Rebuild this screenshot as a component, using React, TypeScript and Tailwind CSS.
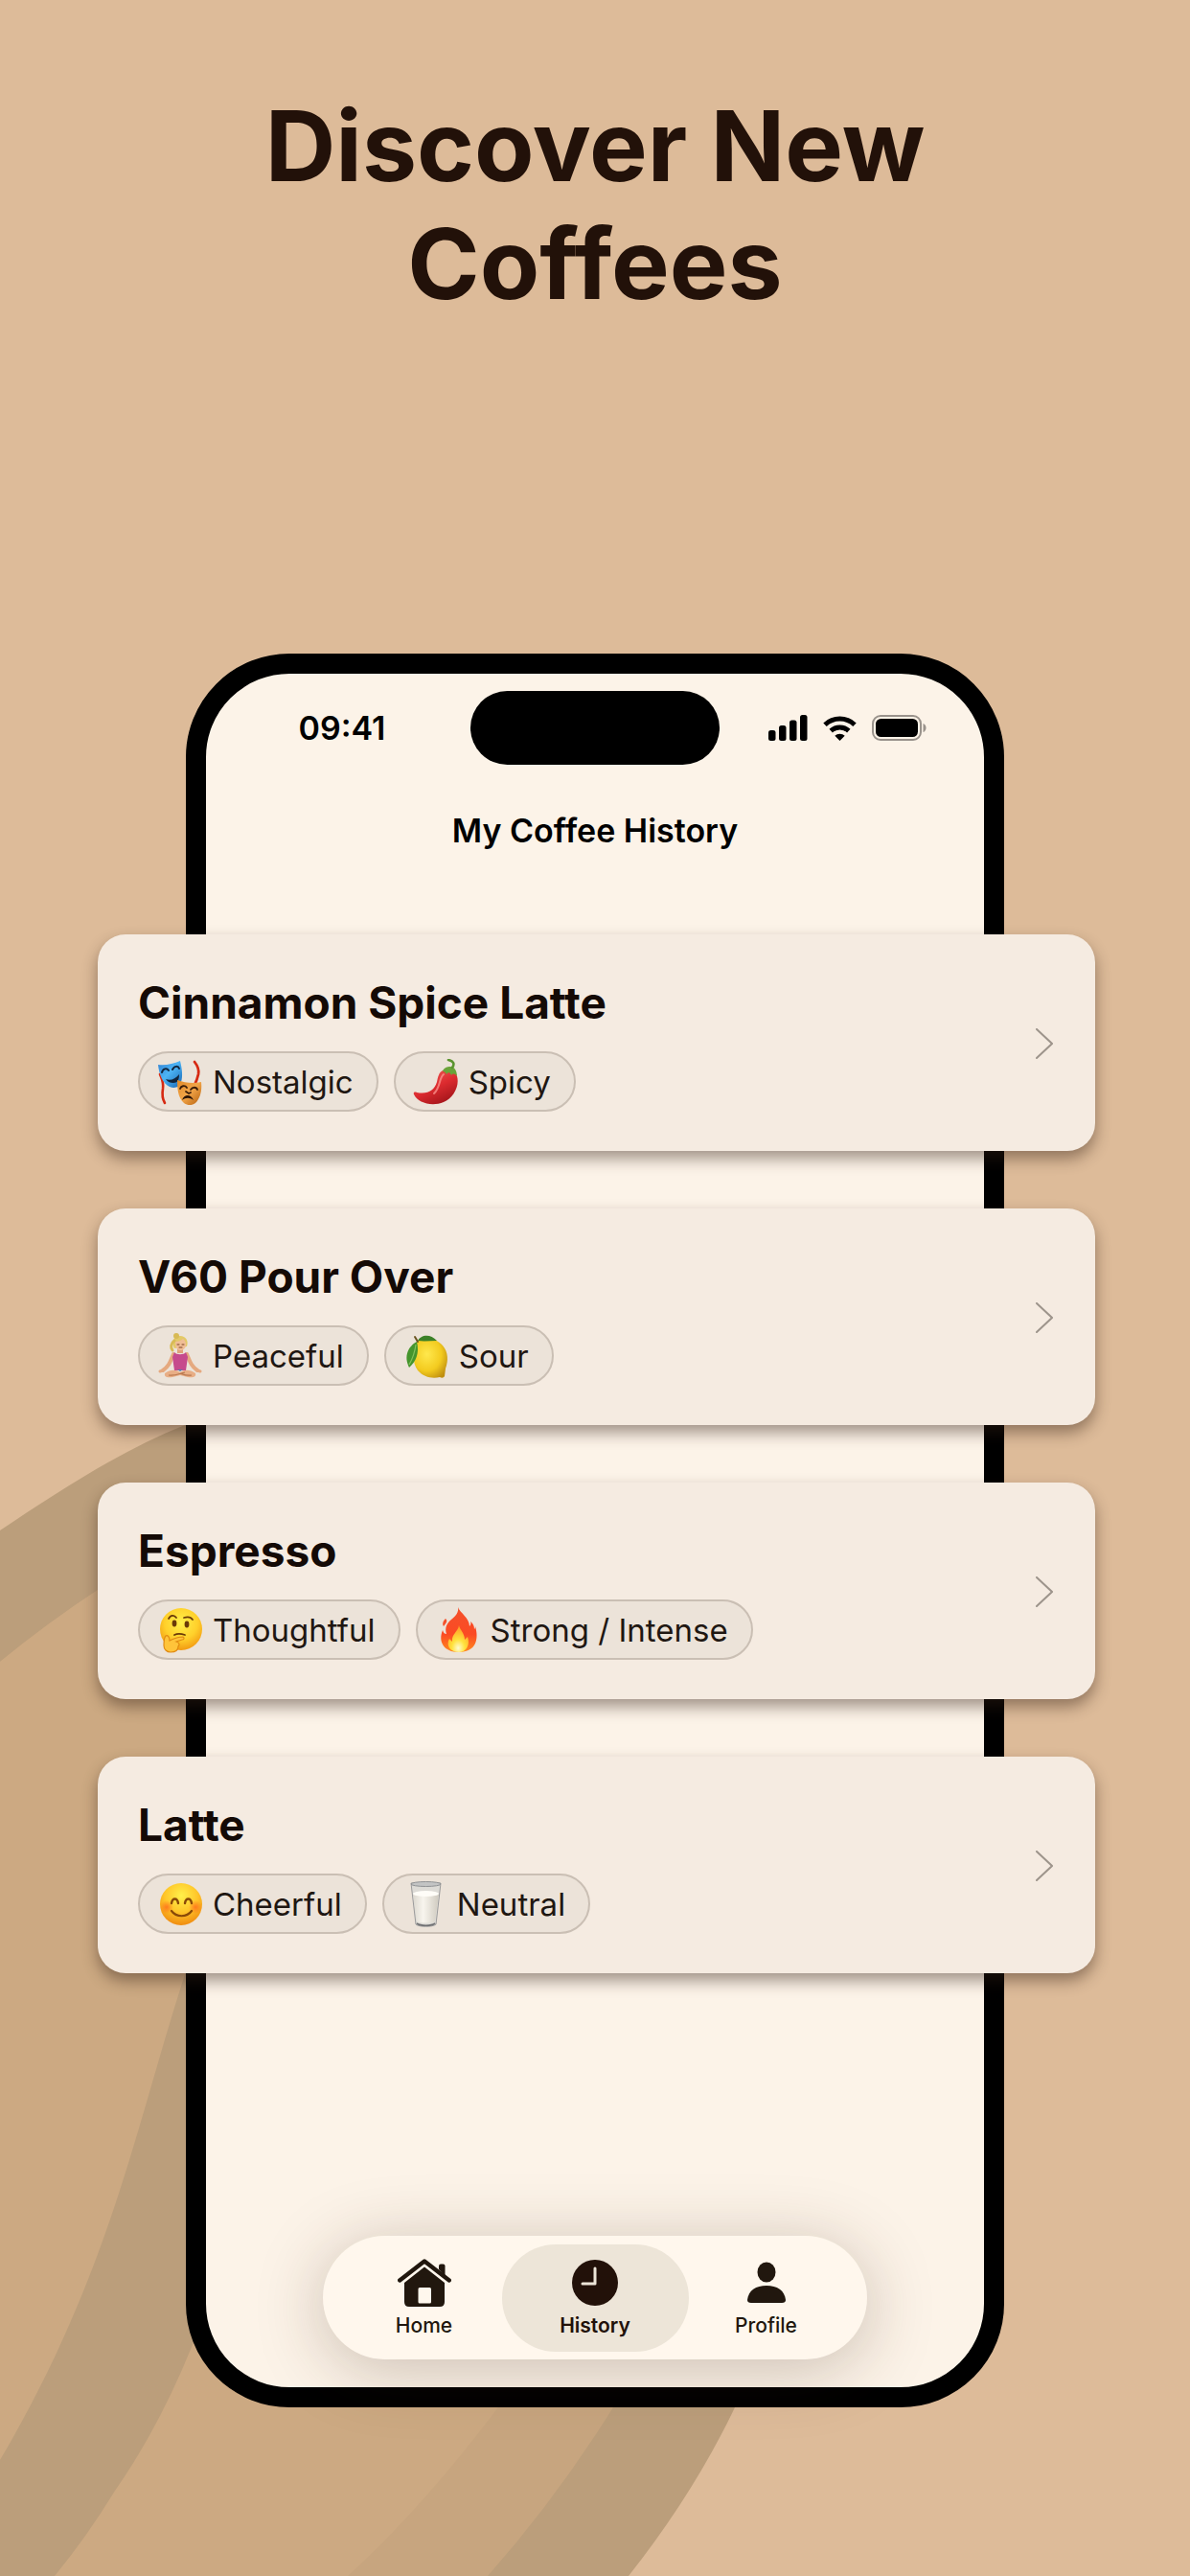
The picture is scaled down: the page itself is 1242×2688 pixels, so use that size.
import type { ReactNode } from "react";

interface Tag {
  label: string;
  icon: ReactNode;
}

interface Coffee {
  name: string;
  tags: Tag[];
}

// Mood and taste icons, all on a 48x48 box
const Icons = {
  masks: (
    <svg viewBox="0 0 48 48" className="size-12 shrink-0" aria-hidden="true">
      <defs>
        <linearGradient id="maskBlue" x1="0" y1="0" x2="1" y2="1">
          <stop offset="0" stopColor="#2f7fd0" />
          <stop offset="0.45" stopColor="#4db4f5" />
          <stop offset="1" stopColor="#1766b4" />
        </linearGradient>
        <linearGradient id="maskGold" x1="0" y1="0" x2="1" y2="1">
          <stop offset="0" stopColor="#e08a2a" />
          <stop offset="0.5" stopColor="#f2a548" />
          <stop offset="1" stopColor="#b5600f" />
        </linearGradient>
      </defs>
      <path d="M3 16c2 5 4 8 3 15-1 6-1 10 2 15" fill="none" stroke="#d62a12" strokeWidth="2.6" strokeLinecap="round" />
      <path d="M39 3c4 5 5 8 4 13-1 4-2 7-3 9" fill="none" stroke="#d62a12" strokeWidth="2.8" strokeLinecap="round" />
      <path d="M1 6c8 1 16-1 23-4 2 8 3 16 1 22-2 6-7 7-12 5C6 26 2 16 1 6z" fill="url(#maskBlue)" />
      <path d="M5 14c1-4 5-5 7-2M16 11c2-4 6-4 7-1" fill="none" stroke="#11243c" strokeWidth="2" strokeLinecap="round" />
      <path d="M9 21c5 2 10 0 14-5 0 6-2 9-6 9-3 0-6-1-8-4z" fill="#11243c" />
      <path d="M21 22c8 3 17 4 25 2 1 9-1 17-6 22-4 3-9 3-13-1-5-5-6-14-6-23z" fill="url(#maskGold)" />
      <path d="M24 31c1-3 5-4 7-1M35 32c2-3 6-3 7 0M30 34l3 2 2-1" fill="none" stroke="#3a1c08" strokeWidth="1.8" strokeLinecap="round" />
      <path d="M26 43c2-6 9-7 12 0-4-3-8-3-12 0z" fill="#2c1406" />
    </svg>
  ),
  chili: (
    <svg viewBox="0 0 48 48" className="size-12 shrink-0" aria-hidden="true">
      <defs>
        <linearGradient id="chiliRed" x1="0.2" y1="0" x2="0.8" y2="1">
          <stop offset="0" stopColor="#f0605a" />
          <stop offset="0.5" stopColor="#dc2b2f" />
          <stop offset="1" stopColor="#9c1218" />
        </linearGradient>
      </defs>
      <path d="M31 12c5-2 13-1 15 6 3 10-4 23-14 27C20 50 5 46 1 37c-1-2 1-3 3-2 12 2 18-2 21-11 1-5 2-10 6-12z" fill="url(#chiliRed)" />
      <path d="M32 16c-5 4-3 13-10 20" fill="none" stroke="#ff9d96" strokeWidth="2" strokeLinecap="round" opacity="0.7" />
      <path d="M31 13c1-4 5-5 8-5 4 0 7 4 7 10-3-3-4-3-6-1-1-3-3-4-5-1-1-2-2-3-4-3z" fill="#6aa43a" />
      <path d="M41 9c3-4 1-7-4-8" fill="none" stroke="#5b9430" strokeWidth="2.6" strokeLinecap="round" />
    </svg>
  ),
  yoga: (
    <svg viewBox="0 0 48 48" className="size-12 shrink-0" aria-hidden="true">
      <path d="M18 16c-4-6-1-13 6-13 6 0 9 5 7 11z" fill="#e3c968" />
      <circle cx="20" cy="3" r="3" fill="#d8ba55" />
      <path d="M18 8c-4 3-4 7-2 10" fill="none" stroke="#d8ba55" strokeWidth="3" strokeLinecap="round" />
      <path d="M21 15h6v6h-6z" fill="#dfa27a" />
      <path d="M19 9c3 0 6-1 8-3 2 2 3 3 3 6 0 4-3 6-6 6s-5-3-5-9z" fill="#f0bd96" />
      <path d="M21 12h2M26 12h2M23 15h3" stroke="#7b4527" strokeWidth="1" strokeLinecap="round" />
      <path d="M17 22c-3 7-4 12-11 17M31 22c3 7 4 12 11 17" fill="none" stroke="#e5a97f" strokeWidth="4" strokeLinecap="round" />
      <path d="M6 39l-3 1M42 39l3 1" stroke="#e5a97f" strokeWidth="3" strokeLinecap="round" />
      <path d="M18 20c2 3 10 3 12 0l2 5-2 14H18l-2-14z" fill="#c64a8d" />
      <path d="M8 42c6-4 11-4 16-1 5-3 10-3 16 1 1 4-3 5-8 4l-8-2-8 2c-5 1-9 0-8-4z" fill="#e8ae85" />
      <path d="M12 44c7 1 12-2 17-3M36 44c-6 1-9-1-12-2" fill="none" stroke="#b9784f" strokeWidth="1.2" />
      <path d="M21 38h6l-3 2z" fill="#5876a8" />
    </svg>
  ),
  lemon: (
    <svg viewBox="0 0 48 48" className="size-12 shrink-0" aria-hidden="true">
      <defs>
        <radialGradient id="lemonYellow" cx="0.4" cy="0.4" r="0.7">
          <stop offset="0" stopColor="#ffe84d" />
          <stop offset="0.6" stopColor="#f3cb1f" />
          <stop offset="1" stopColor="#c08f10" />
        </radialGradient>
      </defs>
      <path d="M15 8c8-4 19-3 26 5 6 7 6 16 3 24l-1 8c-1 2-3 2-5 1-8 2-17 0-23-7-6-8-6-23 0-31z" fill="url(#lemonYellow)" />
      <path d="M15 8c3-6 13-8 20 0-7 0-13 1-20 0z" fill="#3c8128" />
      <path d="M14 9C5 14 0 24 6 36c7-6 11-15 8-27z" fill="#45952d" />
      <path d="M13 12c-1 8-3 14-7 21" fill="none" stroke="#82c25c" strokeWidth="1.2" />
      <path d="M12 4l3 5" stroke="#6b5420" strokeWidth="2" strokeLinecap="round" />
    </svg>
  ),
  thinking: (
    <svg viewBox="0 0 48 48" className="size-12 shrink-0" aria-hidden="true">
      <defs>
        <radialGradient id="faceThink" cx="0.5" cy="0.35" r="0.65">
          <stop offset="0" stopColor="#fff04a" />
          <stop offset="0.6" stopColor="#ffd02b" />
          <stop offset="1" stopColor="#f29a12" />
        </radialGradient>
      </defs>
      <circle cx="25" cy="23" r="22" fill="url(#faceThink)" />
      <ellipse cx="18" cy="17" rx="2.4" ry="3.4" fill="#6a3a08" />
      <ellipse cx="31" cy="18" rx="2.4" ry="3.4" fill="#6a3a08" />
      <path d="M12 12c2-4 6-4 8-1M28 11c3-1 7-1 9 2" fill="none" stroke="#6a3a08" strokeWidth="1.8" strokeLinecap="round" />
      <path d="M18 29c4-2 8-1 11 0" fill="none" stroke="#6a3a08" strokeWidth="1.8" strokeLinecap="round" />
      <path d="M9 30c2-1 4 1 4 5 4-2 9-4 14-4 2 1 1 3-1 3l-6 2c3 1 4 3 2 5 0 4-3 6-8 6-4 0-7-3-7-7 0-4 0-8 2-10z" fill="#ffc43a" stroke="#e08b12" strokeWidth="1.2" />
    </svg>
  ),
  fire: (
    <svg viewBox="0 0 48 48" className="size-12 shrink-0" aria-hidden="true">
      <defs>
        <linearGradient id="flameOuter" x1="0" y1="0" x2="0" y2="1">
          <stop offset="0" stopColor="#f4512c" />
          <stop offset="0.6" stopColor="#fb4a23" />
          <stop offset="1" stopColor="#ff8a1e" />
        </linearGradient>
        <radialGradient id="flameInner" cx="0.5" cy="0.85" r="0.8">
          <stop offset="0" stopColor="#fffbd0" />
          <stop offset="0.4" stopColor="#ffe23c" />
          <stop offset="1" stopColor="#ff9a26" />
        </radialGradient>
      </defs>
      <path d="M24 0c2 6 12 11 12 20 1-1 2-3 1-5 3 2 4 5 4 8 1-1 1-2 1-3 4 13 1 27-17 27C9 47 3 36 8 24c1 3 2 4 4 4-2-6 0-11 5-15 5-4 8-8 7-13z" fill="url(#flameOuter)" />
      <path d="M11 12c3 3 0 5-2 8-2-3 0-6 2-8z" fill="#f4512c" />
      <path d="M25 19c1 5 6 8 6 15l3-3c3 8-1 16-9 16-9 0-14-7-10-14l3 3c-1-8 6-10 7-17z" fill="url(#flameInner)" />
    </svg>
  ),
  smile: (
    <svg viewBox="0 0 48 48" className="size-12 shrink-0" aria-hidden="true">
      <defs>
        <radialGradient id="faceSmile" cx="0.5" cy="0.3" r="0.7">
          <stop offset="0" stopColor="#fff04a" />
          <stop offset="0.55" stopColor="#ffc62a" />
          <stop offset="1" stopColor="#f08c10" />
        </radialGradient>
        <radialGradient id="blush">
          <stop offset="0" stopColor="#ff6a1c" stopOpacity="0.8" />
          <stop offset="1" stopColor="#ff6a1c" stopOpacity="0" />
        </radialGradient>
      </defs>
      <circle cx="25" cy="24" r="22" fill="url(#faceSmile)" />
      <circle cx="10" cy="27" r="7" fill="url(#blush)" />
      <circle cx="40" cy="27" r="7" fill="url(#blush)" />
      <path d="M15 23c1-6 6-6 7 0M29 23c1-6 6-6 7 0" fill="none" stroke="#8a4a08" strokeWidth="2.4" strokeLinecap="round" />
      <path d="M15 31c5 7 16 7 21 0" fill="none" stroke="#8a4a08" strokeWidth="2.2" strokeLinecap="round" />
    </svg>
  ),
  milk: (
    <svg viewBox="0 0 48 48" className="size-12 shrink-0" aria-hidden="true">
      <defs>
        <linearGradient id="milkBody" x1="0" y1="0" x2="1" y2="0">
          <stop offset="0" stopColor="#dcd8cf" />
          <stop offset="0.4" stopColor="#f8f5ee" />
          <stop offset="1" stopColor="#cfcabf" />
        </linearGradient>
      </defs>
      <path d="M10 2h31l-5 43c-3 3-18 3-21 0z" fill="#dddbd6" stroke="#9b9b9b" strokeWidth="1" />
      <path d="M12 13h27l-4 29c-3 2-16 2-19 0z" fill="url(#milkBody)" />
      <ellipse cx="25.500" cy="13" rx="13.500" ry="3" fill="#fffdf8" />
      <ellipse cx="25.500" cy="3" rx="15.500" ry="2.500" fill="#c3c4c4" stroke="#919395" strokeWidth="1" />
      <path d="M16 44c4 3 15 3 19 0" fill="none" stroke="#6f7072" strokeWidth="1.6" />
    </svg>
  ),
};

const COFFEES: Coffee[] = [
  { name: "Cinnamon Spice Latte", tags: [{ label: "Nostalgic", icon: Icons.masks }, { label: "Spicy", icon: Icons.chili }] },
  { name: "V60 Pour Over", tags: [{ label: "Peaceful", icon: Icons.yoga }, { label: "Sour", icon: Icons.lemon }] },
  { name: "Espresso", tags: [{ label: "Thoughtful", icon: Icons.thinking }, { label: "Strong / Intense", icon: Icons.fire }] },
  { name: "Latte", tags: [{ label: "Cheerful", icon: Icons.smile }, { label: "Neutral", icon: Icons.milk }] },
];

export default function App() {
  return (
    <main className="relative isolate flex min-h-screen flex-col items-center overflow-hidden bg-[#ddbb99] px-6 pt-[91px] pb-44 font-[Inter,sans-serif] text-[#221109]">
      <BeanBackdrop />
      <h1 className="max-w-[800px] text-center text-[102px] leading-[123px] font-bold">Discover New Coffees</h1>

      {/* Phone */}
      <div className="mt-[345px] flex min-h-[1830px] w-full max-w-[854px] flex-col rounded-[108px] border-[21px] border-black bg-[#fcf3e8]">
        <StatusBar />
        <h2 className="mt-[49px] text-center text-[34px] leading-10 font-semibold text-black">My Coffee History</h2>
        <ul className="mt-22 -mr-[116px] -ml-[113px] flex flex-col gap-15">
          {COFFEES.map((coffee) => (
            <CoffeeCard key={coffee.name} coffee={coffee} />
          ))}
        </ul>
        <TabBar />
      </div>
    </main>
  );
}

function BeanBackdrop() {
  return (
    <svg className="absolute bottom-0 left-0 -z-10 h-[1242px] w-[800px]" viewBox="0 1446 800 1242" aria-hidden="true">
      <path d="M0 1597C60 1557 125 1514 193 1487C420 1410 880 1500 860 2100C855 2260 815 2410 767 2512Q724 2602 656 2688H0z" fill="#bb9e7b" />
      <path d="M0 1734Q50 1693 105 1657C350 1520 790 1640 770 2080C765 2250 705 2390 640 2512Q580 2608 509 2688H0z" fill="#c7a57f" />
      <path d="M0 1734Q50 1693 105 1657C350 1520 660 1700 640 2080C635 2250 590 2390 520 2512Q440 2618 363 2688H0z" fill="#cca982" />
      <path d="M230 1960C150 2150 140 2330 0 2567V2688H57Q90 2648 120 2599Q166 2533 200 2449L260 2300z" fill="#bb9e7b" />
    </svg>
  );
}

function StatusBar() {
  return (
    <div className="grid grid-cols-[1fr_260px_1fr] items-center pt-[18px] text-black">
      <p className="pl-2 text-center text-[34px] leading-10 font-semibold">09:41</p>
      <div className="h-[77px] rounded-full bg-black" />
      <div className="flex items-center justify-center gap-4 pr-2.5">
        <svg width="41" height="27" viewBox="0 0 41 27" aria-hidden="true">
          <rect x="0" y="16" width="7.500" height="11" rx="2.500" />
          <rect x="11" y="11" width="7.500" height="16" rx="2.500" />
          <rect x="22" y="5.500" width="7.500" height="21.500" rx="2.500" />
          <rect x="33" y="0" width="7.500" height="27" rx="2.500" />
        </svg>
        <svg width="35" height="26" viewBox="0 0 35 26" aria-hidden="true">
          <path d="M2 9.200a22.500 22.500 0 0 1 31 0M8.200 15.600a13.500 13.500 0 0 1 18.600 0" fill="none" stroke="currentColor" strokeWidth="5" />
          <path d="M17.500 26l-5.200-5.200a7.500 7.500 0 0 1 10.400 0z" />
        </svg>
        <svg width="57" height="27" viewBox="0 0 57 27" aria-hidden="true">
          <rect x="1" y="1" width="50" height="25" rx="8" fill="none" stroke="#9a938c" strokeWidth="2" />
          <rect x="4" y="4" width="44" height="19" rx="5.500" />
          <path d="M53.500 9c4 1 4 8 0 9z" fill="#9a938c" />
        </svg>
      </div>
    </div>
  );
}

function CoffeeCard({ coffee }: { coffee: Coffee }) {
  return (
    <li>
      <a
        href="#"
        className="flex items-center justify-between rounded-[29px] bg-[#f5ebe1] pt-[43px] pr-11 pb-[41px] pl-[42px] shadow-[0_8px_16px_rgba(50,30,20,0.45)]"
      >
        <div>
          <h3 className="text-[46px] leading-14 font-bold text-[#140a06]">{coffee.name}</h3>
          <ul className="mt-[23px] flex gap-4">
            {coffee.tags.map((tag) => (
              <li
                key={tag.label}
                className="flex h-[63px] items-center gap-2.5 rounded-full border-2 border-[#cabfb4] bg-[#ece3d9] pr-6 pl-[18px] text-[33px] leading-10 text-[#1f1712]"
              >
                {tag.icon}
                {tag.label}
              </li>
            ))}
          </ul>
        </div>
        <svg width="18" height="32" viewBox="0 0 18 32" fill="none" stroke="#9d948b" strokeWidth="2" strokeLinecap="round" aria-hidden="true">
          <path d="M1 1l16 15L1 31" />
        </svg>
      </a>
    </li>
  );
}

function TabBar() {
  return (
    <nav className="mx-auto mt-auto mb-[29px] flex h-[129px] w-full max-w-[568px] items-center justify-center rounded-full bg-[#fff7ed] text-[21px] leading-6 font-medium shadow-[0_10px_70px_rgba(60,40,25,0.26)]">
      <a href="#" className="flex h-28 w-[178px] flex-col items-center justify-center gap-2 text-[#21170e]">
        <svg width="56" height="50" viewBox="0 0 56 50" aria-hidden="true">
          <path d="M2.200 22.500L28 2.500l25.800 20" fill="none" stroke="currentColor" strokeWidth="4.400" strokeLinecap="round" strokeLinejoin="round" />
          <path d="M43 11V7.500q0-2 2-2h2.500q2 0 2 2V18z" fill="currentColor" />
          <path fillRule="evenodd" d="M28 8.500L49 25v20q0 5-5 5H12q-5 0-5-5V25zM21.500 31.500v13.500q0 1.500 1.500 1.500h10.500q1.500 0 1.500-1.500V31.500q0-1.500-1.500-1.500H23q-1.500 0-1.500 1.500z" fill="currentColor" />
        </svg>
        Home
      </a>
      <a
        href="#"
        aria-current="page"
        className="-mx-2 flex h-28 w-[195px] flex-col items-center justify-center gap-2 rounded-full bg-[#ede5d8] font-semibold"
      >
        <svg width="50" height="50" viewBox="0 0 50 50" aria-hidden="true">
          <circle cx="25" cy="25" r="24" fill="currentColor" />
          <path d="M25 10v16H12" fill="none" stroke="#ede5d8" strokeWidth="3" strokeLinecap="round" strokeLinejoin="round" />
        </svg>
        History
      </a>
      <a href="#" className="flex h-28 w-[178px] flex-col items-center justify-center gap-2 text-[#21170e]">
        <svg width="40" height="50" viewBox="0 0 40 50" aria-hidden="true">
          <ellipse cx="20" cy="14" rx="9.500" ry="10.500" fill="currentColor" />
          <path d="M0 43c1-10 9-15 20-15s19 5 20 15q0 3-4 3H4q-4 0-4-3z" fill="currentColor" />
        </svg>
        Profile
      </a>
    </nav>
  );
}
